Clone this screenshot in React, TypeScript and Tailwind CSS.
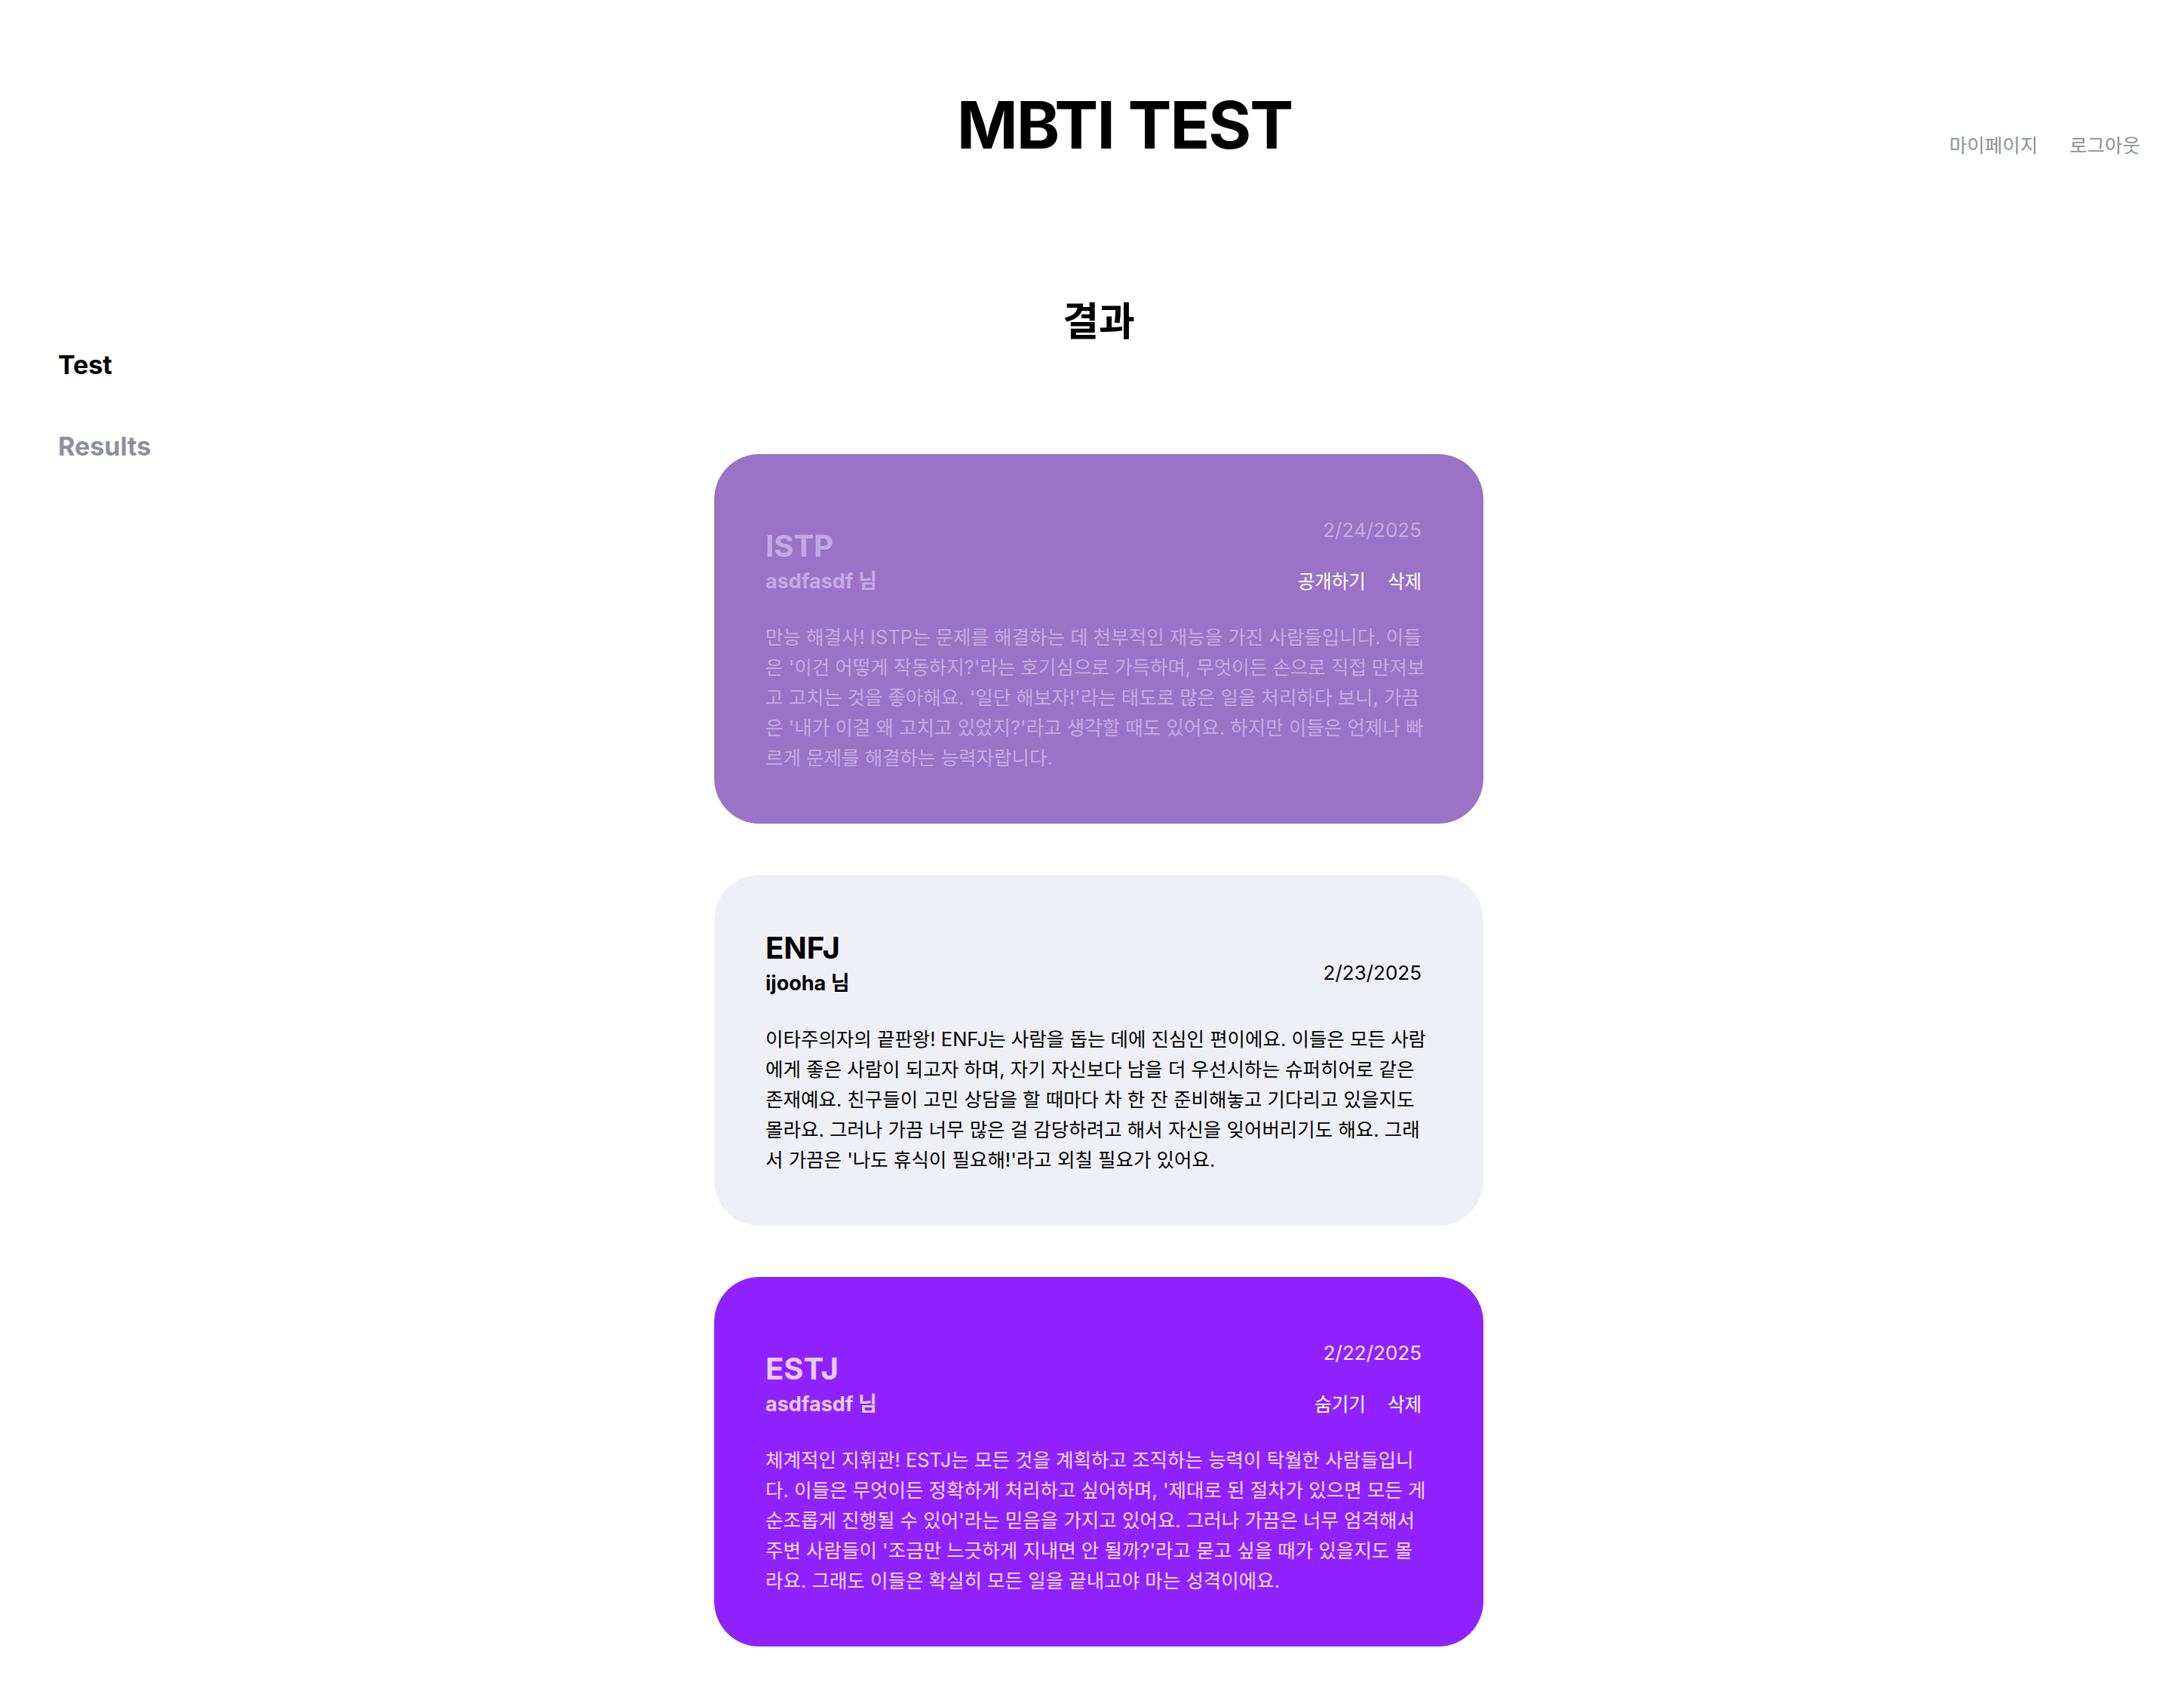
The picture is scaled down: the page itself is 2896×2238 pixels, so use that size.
import React from 'react';

type Variant = 'private' | 'other' | 'public';

const styles: Record<Variant, { bg: string; head: string; date: string; body: string }> = {
  private: {
    bg: 'bg-[#9b73c6]',
    head: 'text-[#c6a9e4]',
    date: 'text-[#c6a9e4]',
    body: 'text-[#c6a9e4]'
  },
  other: {
    bg: 'bg-[#eff0f5]',
    head: 'text-black',
    date: 'text-black',
    body: 'text-black'
  },
  public: {
    bg: 'bg-[#8f22ff]',
    head: 'text-[#e8cbff]',
    date: 'text-[#f2e6ff]',
    body: 'text-[#efdcff]'
  }
};

const results: {
  type: string;
  user: string;
  date: string;
  action?: string;
  variant: Variant;
  text: string;
}[] = [
  {
    type: 'ISTP',
    user: 'asdfasdf',
    date: '2/24/2025',
    action: '공개하기',
    variant: 'private',
    text: "만능 해결사! ISTP는 문제를 해결하는 데 천부적인 재능을 가진 사람들입니다. 이들\n은 '이건 어떻게 작동하지?'라는 호기심으로 가득하며, 무엇이든 손으로 직접 만져보\n고 고치는 것을 좋아해요. '일단 해보자!'라는 태도로 많은 일을 처리하다 보니, 가끔\n은 '내가 이걸 왜 고치고 있었지?'라고 생각할 때도 있어요. 하지만 이들은 언제나 빠\n르게 문제를 해결하는 능력자랍니다."
  },
  {
    type: 'ENFJ',
    user: 'ijooha',
    date: '2/23/2025',
    variant: 'other',
    text: "이타주의자의 끝판왕! ENFJ는 사람을 돕는 데에 진심인 편이에요. 이들은 모든 사람\n에게 좋은 사람이 되고자 하며, 자기 자신보다 남을 더 우선시하는 슈퍼히어로 같은\n존재예요. 친구들이 고민 상담을 할 때마다 차 한 잔 준비해놓고 기다리고 있을지도\n몰라요. 그러나 가끔 너무 많은 걸 감당하려고 해서 자신을 잊어버리기도 해요. 그래\n서 가끔은 '나도 휴식이 필요해!'라고 외칠 필요가 있어요."
  },
  {
    type: 'ESTJ',
    user: 'asdfasdf',
    date: '2/22/2025',
    action: '숨기기',
    variant: 'public',
    text: "체계적인 지휘관! ESTJ는 모든 것을 계획하고 조직하는 능력이 탁월한 사람들입니\n다. 이들은 무엇이든 정확하게 처리하고 싶어하며, '제대로 된 절차가 있으면 모든 게\n순조롭게 진행될 수 있어'라는 믿음을 가지고 있어요. 그러나 가끔은 너무 엄격해서\n주변 사람들이 '조금만 느긋하게 지내면 안 될까?'라고 묻고 싶을 때가 있을지도 몰\n라요. 그래도 이들은 확실히 모든 일을 끝내고야 마는 성격이에요."
  }
];

function ResultCard({ item }: { item: (typeof results)[number] }) {
  const s = styles[item.variant];
  return <div className={`w-[1020px] rounded-[60px] px-[68px] pt-[73px] pb-[67px] ${s.bg}`}>
      <div className="flex items-end justify-between">
        <div>
          <h3 className={`text-[40px] leading-[48px] font-bold ${s.head}`}>{item.type}</h3>
          <p className={`mt-[5px] text-[27px] leading-[36px] font-bold ${s.head}`}>
            {item.user} 님
          </p>
        </div>
        <div className="mr-[14px] flex flex-col items-end">
          <span className={`text-[26px] leading-[36px] ${s.date} ${item.action ? 'mt-[10px]' : 'mb-[14px]'}`}>
            {item.date}
          </span>
          {item.action && <div className="mt-[32px] flex gap-[29px] text-[24.5px] leading-[36px] text-white">
              <button>{item.action}</button>
              <button>삭제</button>
            </div>}
        </div>
      </div>
      <p className={`mt-[36px] whitespace-pre-line text-[25.5px] leading-[40px] ${s.body}`}>
        {item.text}
      </p>
    </div>;
}

export default function App() {
  return <div className="min-h-screen bg-white font-['Inter','Noto_Sans_CJK_KR',sans-serif] text-black">
      <header className="grid grid-cols-[1fr_auto_1fr] pt-[122px] pb-[51px]">
        <div />
        <h1 className="ml-[86px] text-[87px] leading-[87px] font-bold tracking-[-2px]">MBTI TEST</h1>
        <nav className="flex justify-end gap-[42px] pr-[58px] pt-[53px] text-[25.5px] leading-[36px] text-[#8e9199]">
          <button>마이페이지</button>
          <button>로그아웃</button>
        </nav>
      </header>
      <div className="flex">
        <aside className="flex w-[300px] shrink-0 flex-col gap-[68px] pl-[77px] pt-[202px] text-[34px] leading-[40px] font-bold">
          <a>Test</a>
          <a className="text-[#8e9199]">Results</a>
        </aside>
        <main className="flex flex-1 flex-col items-center pr-[282px] pt-[134px] pb-[56px]">
          <h2 className="text-[52px] leading-[62px] font-bold">결과</h2>
          <div className="mt-[144px] flex flex-col gap-[68px]">
            {results.map(r => <ResultCard key={r.type} item={r} />)}
          </div>
        </main>
      </div>
    </div>;
}
